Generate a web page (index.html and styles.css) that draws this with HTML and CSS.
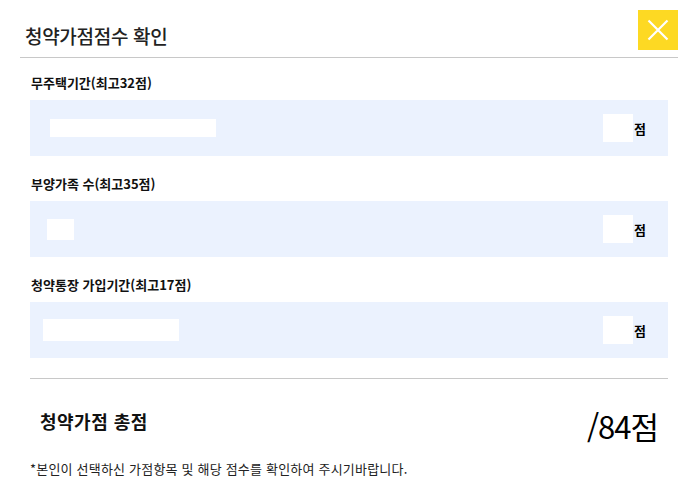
FILE: index.html
```html
<!DOCTYPE html>
<html lang="ko">
<head>
<meta charset="utf-8">
<link rel="stylesheet" href="styles.css">
</head>
<body>
<div class="modal">
  <div class="modal-header">
    <h1 class="modal-title">청약가점점수 확인</h1>
    <button class="close-btn" aria-label="닫기">
      <svg width="40" height="40" viewBox="0 0 40 40"><path d="M10.5 10.5 L29.5 29.5 M29.5 10.5 L10.5 29.5" stroke="#fff" stroke-width="2.2" fill="none"/></svg>
    </button>
  </div>
  <div class="modal-body">
    <div class="group first">
      <div class="label">무주택기간(최고32점)</div>
      <div class="field">
        <span class="mask mask-1"></span>
        <span class="score"><span class="mask-score"></span><span class="unit">점</span></span>
      </div>
    </div>
    <div class="group">
      <div class="label">부양가족 수(최고35점)</div>
      <div class="field">
        <span class="mask mask-2"></span>
        <span class="score"><span class="mask-score"></span><span class="unit">점</span></span>
      </div>
    </div>
    <div class="group">
      <div class="label">청약통장 가입기간(최고17점)</div>
      <div class="field">
        <span class="mask mask-3"></span>
        <span class="score"><span class="mask-score"></span><span class="unit">점</span></span>
      </div>
    </div>
    <div class="total">
      <span class="total-label">청약가점 총점</span>
      <span class="total-value">/84점</span>
    </div>
    <p class="note">*본인이 선택하신 가점항목 및 해당 점수를 확인하여 주시기바랍니다.</p>
  </div>
</div>
</body>
</html>
```
FILE: styles.css
```css
* { box-sizing: border-box; }
html, body { margin: 0; padding: 0; background: #fff; }
body {
  font-family: "Noto Sans CJK KR", "Noto Sans", sans-serif;
  color: #111;
  width: 698px;
  height: 484px;
  overflow: hidden;
}
.modal { padding: 10px 20px 0 20px; }
.modal-header {
  display: flex;
  justify-content: space-between;
  align-items: flex-start;
  height: 48px;
  border-bottom: 1px solid #c8c8c8;
}
.modal-title {
  margin: 0;
  padding: 13px 0 0 5px;
  font-size: 19px;
  font-weight: 500;
  line-height: 26px;
  color: #222;
  letter-spacing: -0.3px;
}
.close-btn {
  width: 40px;
  height: 40px;
  padding: 0;
  border: 0;
  background: #fdd923;
  display: flex;
  align-items: center;
  justify-content: center;
}
.modal-body { padding: 0 10px; }
.group { padding-top: 19px; }
.group.first { padding-top: 16px; }
.label {
  font-size: 13px;
  font-weight: 700;
  line-height: 18px;
  padding-left: 1px;
  margin-bottom: 8px;
  color: #111;
}
.field {
  height: 56px;
  background: #ebf2fe;
  display: flex;
  align-items: center;
  justify-content: space-between;
  padding-right: 22px;
}
.mask { display: block; background: #fff; height: 18px; }
.mask-1 { margin-left: 20px; width: 166px; }
.mask-2 { margin-left: 17px; width: 27px; height: 21px; }
.mask-3 { margin-left: 13px; width: 136px; height: 22px; }
.score { display: flex; align-items: center; }
.mask-score { display: block; width: 30px; height: 28px; background: #fff; margin-right: 1px; }
.unit { font-size: 13px; font-weight: 700; color: #000; }
.total {
  margin-top: 20px;
  border-top: 1px solid #c8c8c8;
  display: flex;
  justify-content: space-between;
  align-items: center;
  height: 80px;
  padding: 4px 10px 0 10px;
}
.total-label { font-size: 18px; font-weight: 700; color: #111; letter-spacing: 0.5px; }
.total-value { font-size: 31px; font-weight: 400; color: #000; letter-spacing: -1px; padding-top: 10px; }
.note {
  margin: 0;
  padding-top: 2px;
  font-size: 13px;
  line-height: 18px;
  color: #222;
  letter-spacing: 0.2px;
}
```
